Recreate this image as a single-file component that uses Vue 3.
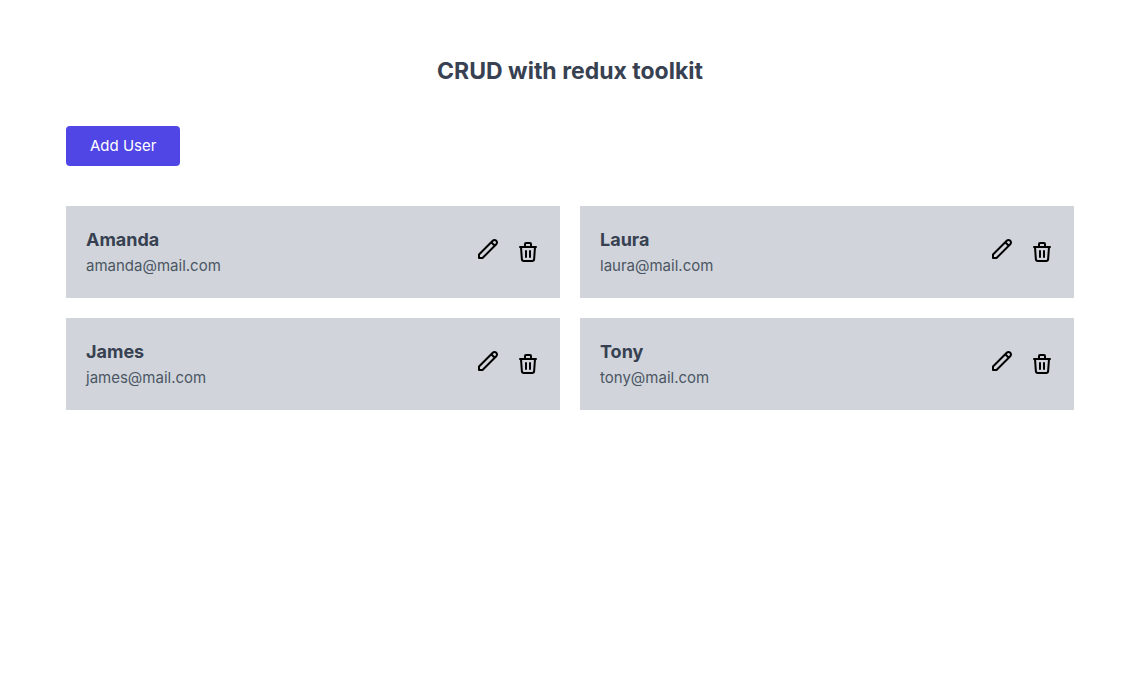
<script setup>
const users = [
  { id: 1, name: 'Amanda', email: 'amanda@mail.com' },
  { id: 2, name: 'Laura', email: 'laura@mail.com' },
  { id: 3, name: 'James', email: 'james@mail.com' },
  { id: 4, name: 'Tony', email: 'tony@mail.com' },
]
</script>

<template>
  <div class="page">
    <main class="container">
      <h1 class="title">CRUD with redux toolkit</h1>
      <div class="toolbar">
        <button type="button" class="add">Add User</button>
      </div>
      <section class="grid">
        <article v-for="user in users" :key="user.id" class="card">
          <div class="info">
            <h2 class="name">{{ user.name }}</h2>
            <span class="email">{{ user.email }}</span>
          </div>
          <div class="actions">
            <a href="#" class="action edit" :aria-label="`Edit ${user.name}`">
              <svg class="icon" viewBox="0 0 24 24">
                <path d="M15.232 5.232l3.536 3.536m-2.036-5.036a2.5 2.5 0 113.536 3.536L6.5 21.036H3v-3.572L16.732 3.732z" />
              </svg>
            </a>
            <button type="button" class="action" :aria-label="`Delete ${user.name}`">
              <svg class="icon" viewBox="0 0 24 24">
                <path d="M19 7l-.867 12.142A2 2 0 0116.138 21H7.862a2 2 0 01-1.995-1.858L5 7m5 4v6m4-6v6m1-10V4a1 1 0 00-1-1h-4a1 1 0 00-1 1v3M4 7h16" />
              </svg>
            </button>
          </div>
        </article>
      </section>
    </main>
  </div>
</template>

<style>
body {
  background: #fff;
}
</style>

<style scoped>
.page {
  padding-left: 5px;
}
.container {
  box-sizing: border-box;
  max-width: 1024px;
  margin: 0 auto;
  padding: 56px 8px 40px;
  font-family: Inter, "Liberation Sans", sans-serif;
  font-size: 15px;
  line-height: 24px;
  color: #374151;
}
.title {
  margin: 0;
  font-size: 23px;
  line-height: 30px;
  font-weight: 700;
  text-align: center;
}
.toolbar {
  display: flex;
  margin: 40px 0;
}
.add {
  padding: 8px 24px;
  border: 0;
  border-radius: 4px;
  background: #4f46e5;
  color: #fff;
  font: inherit;
  cursor: pointer;
}
.grid {
  display: grid;
  grid-template-columns: repeat(2, 1fr);
  gap: 20px;
}
.card {
  display: flex;
  align-items: center;
  justify-content: space-between;
  padding: 20px;
  background: #d1d5db;
}
.name {
  margin: 0;
  font-size: 18px;
  line-height: 28px;
  font-weight: 700;
}
.email {
  color: #4b5563;
}
.actions {
  display: flex;
  align-items: center;
  gap: 16px;
}
.action {
  padding: 0;
  border: 0;
  background: none;
  color: #000;
  cursor: pointer;
}
.edit {
  padding-bottom: 6px;
}
.icon {
  display: block;
  width: 24px;
  height: 24px;
  fill: none;
  stroke: currentColor;
  stroke-width: 2;
  stroke-linecap: round;
  stroke-linejoin: round;
}
</style>
